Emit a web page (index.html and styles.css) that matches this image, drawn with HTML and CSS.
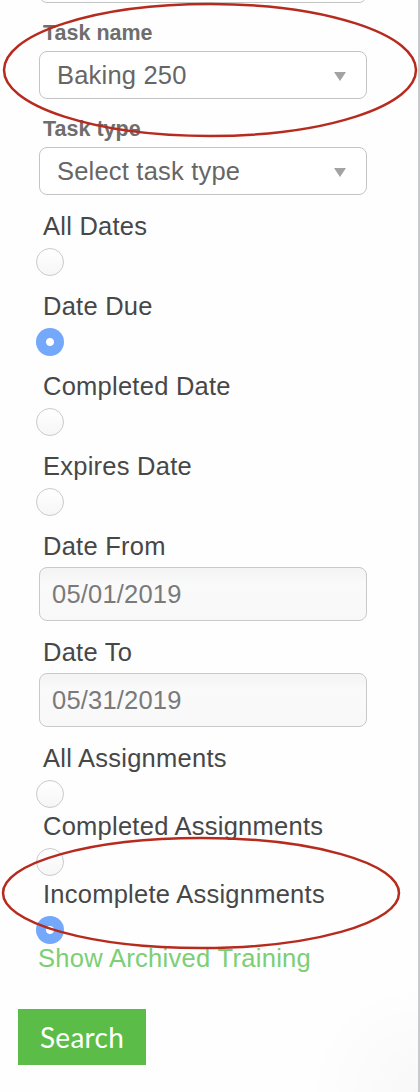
FILE: index.html
```html
<!DOCTYPE html>
<html lang="en">
<head>
    <meta charset="UTF-8">
    <meta name="viewport" content="width=device-width, initial-scale=1.0">
    <title>Training Report Filters</title>
    <link rel="stylesheet" href="styles.css">
</head>
<body>

    <div class="panel">
        <!-- field scrolled above the view, only its bottom edge shows -->
        <div class="select-wrap stub">
            <select class="select"><option>Select location</option></select>
        </div>

        <!-- Task filters -->
        <label class="field-label" for="task_name">Task name</label>
        <div class="select-wrap">
            <select class="select" id="task_name" name="task_name">
                <option>Baking 250</option>
            </select>
        </div>

        <label class="field-label" for="task_type">Task type</label>
        <div class="select-wrap">
            <select class="select" id="task_type" name="task_type">
                <option>Select task type</option>
            </select>
        </div>

        <!-- Date filters -->
        <div class="radio-group first">
            <label class="radio-label" for="all_dates">All Dates</label>
            <input class="radio" type="radio" id="all_dates" name="date_filter">
        </div>
        <div class="radio-group">
            <label class="radio-label" for="date_due">Date Due</label>
            <input class="radio" type="radio" id="date_due" name="date_filter" checked>
        </div>
        <div class="radio-group">
            <label class="radio-label" for="completed_date">Completed Date</label>
            <input class="radio" type="radio" id="completed_date" name="date_filter">
        </div>
        <div class="radio-group">
            <label class="radio-label" for="expires_date">Expires Date</label>
            <input class="radio" type="radio" id="expires_date" name="date_filter">
        </div>

        <label class="radio-label" for="date_from">Date From</label>
        <input class="date-input" type="text" id="date_from" name="date_from" value="05/01/2019">

        <label class="radio-label date-to" for="date_to">Date To</label>
        <input class="date-input" type="text" id="date_to" name="date_to" value="05/31/2019">

        <!-- Assignment filters -->
        <div class="radio-group tight first-assign">
            <label class="radio-label" for="all_assign">All Assignments</label>
            <input class="radio" type="radio" id="all_assign" name="assign_filter">
        </div>
        <div class="radio-group tight">
            <label class="radio-label" for="completed_assign">Completed Assignments</label>
            <input class="radio" type="radio" id="completed_assign" name="assign_filter">
        </div>
        <div class="radio-group tight">
            <label class="radio-label" for="incomplete_assign">Incomplete Assignments</label>
            <input class="radio" type="radio" id="incomplete_assign" name="assign_filter" checked>
        </div>

        <a class="archived-link" href="#">Show Archived Training</a>

        <button class="search-button" type="button">Search</button>

        <!-- Review annotations drawn over the form -->
        <svg class="marks" width="420" height="1092" viewBox="0 0 420 1092">
            <ellipse cx="210" cy="70" rx="206" ry="66" />
            <ellipse cx="201" cy="893" rx="198" ry="55" />
        </svg>
    </div>

</body>
</html>
```

FILE: styles.css
```css
body {
    margin: 0;
    font-family: "Liberation Sans", Arial, sans-serif;
    background-color: #fdfefd;
    overflow: hidden;
}

.panel {
    display: flow-root;
    position: relative;
    width: 420px;
    height: 1092px;
    box-sizing: border-box;
    padding: 0 51px 0 39px;
    border-right: 2px solid #c9cacb;
    background: radial-gradient(circle at 100% 100%, rgba(0, 0, 0, 0.025), rgba(0, 0, 0, 0) 110px);
}

/* Selects */
.select-wrap {
    position: relative;
    margin-top: 6px;
}

.select-wrap.stub {
    margin-top: -45px;
}

.select-wrap::after {
    content: '';
    position: absolute;
    right: 21px;
    top: 21px;
    border-left: 6px solid transparent;
    border-right: 6px solid transparent;
    border-top: 9px solid #a3a3a3;
}

.select {
    display: block;
    width: 100%;
    height: 48px;
    box-sizing: border-box;
    padding: 0 40px 0 17px;
    border: 1px solid #c4c4c4;
    border-radius: 8px;
    background-color: #ffffff;
    -webkit-appearance: none;
    appearance: none;
    font-family: "Liberation Sans", Arial, sans-serif;
    font-size: 25.5px;
    letter-spacing: 0.2px;
    color: #666;
}

.field-label {
    display: block;
    margin-top: 18px;
    margin-left: 4px;
    font-size: 21.5px;
    line-height: 24px;
    font-weight: bold;
    color: #6e6e6e;
}

/* Radios */
.radio-group {
    margin-bottom: 15px;
}

.radio-group.first {
    margin-top: 16px;
}

.radio-group.tight {
    margin-bottom: 3px;
}

.radio-group.first-assign {
    margin-top: 16px;
}

.radio-label {
    display: block;
    margin-left: 4px;
    font-size: 25.5px;
    line-height: 30px;
    letter-spacing: 0.25px;
    color: #474747;
}

.radio {
    display: block;
    width: 28px;
    height: 28px;
    margin: 7px 0 0 -3px;
    border: 1px solid #cacaca;
    border-radius: 50%;
    box-sizing: border-box;
    background: linear-gradient(#ffffff, #f6f6f6);
    -webkit-appearance: none;
    appearance: none;
}

.radio:checked {
    border: none;
    background: radial-gradient(circle, #ffffff 0, #ffffff 3.5px, #73a8fa 4.5px);
}

/* Dates */
.date-input {
    display: block;
    width: 100%;
    height: 54px;
    margin-top: 6px;
    box-sizing: border-box;
    padding: 0 12px;
    border: 1.5px solid #c9c9c9;
    border-radius: 8px;
    background: linear-gradient(#f3f3f3, #fafafa 30%, #f8f8f8);
    font-family: "Liberation Sans", Arial, sans-serif;
    font-size: 25.5px;
    letter-spacing: 0.2px;
    color: #7a7a7a;
}

.radio-label.date-to {
    margin-top: 16px;
}

.archived-link {
    display: block;
    margin-top: -1px;
    margin-left: -1px;
    font-size: 25.5px;
    line-height: 24px;
    letter-spacing: 0.3px;
    color: #7bcf74;
    text-decoration: none;
}

.search-button {
    display: block;
    width: 128px;
    height: 56px;
    margin: 39px 0 0 -21px;
    padding: 0;
    border: none;
    background-color: #5bbd48;
    color: white;
    font-family: Lato, "Open Sans", sans-serif;
    font-size: 28px;
    letter-spacing: 0.3px;
    cursor: pointer;
}

/* Red review marks */
.marks {
    position: absolute;
    top: 0;
    left: 0;
    pointer-events: none;
}

.marks ellipse {
    fill: none;
    stroke: #b72a1e;
    stroke-width: 2.5;
}
```
